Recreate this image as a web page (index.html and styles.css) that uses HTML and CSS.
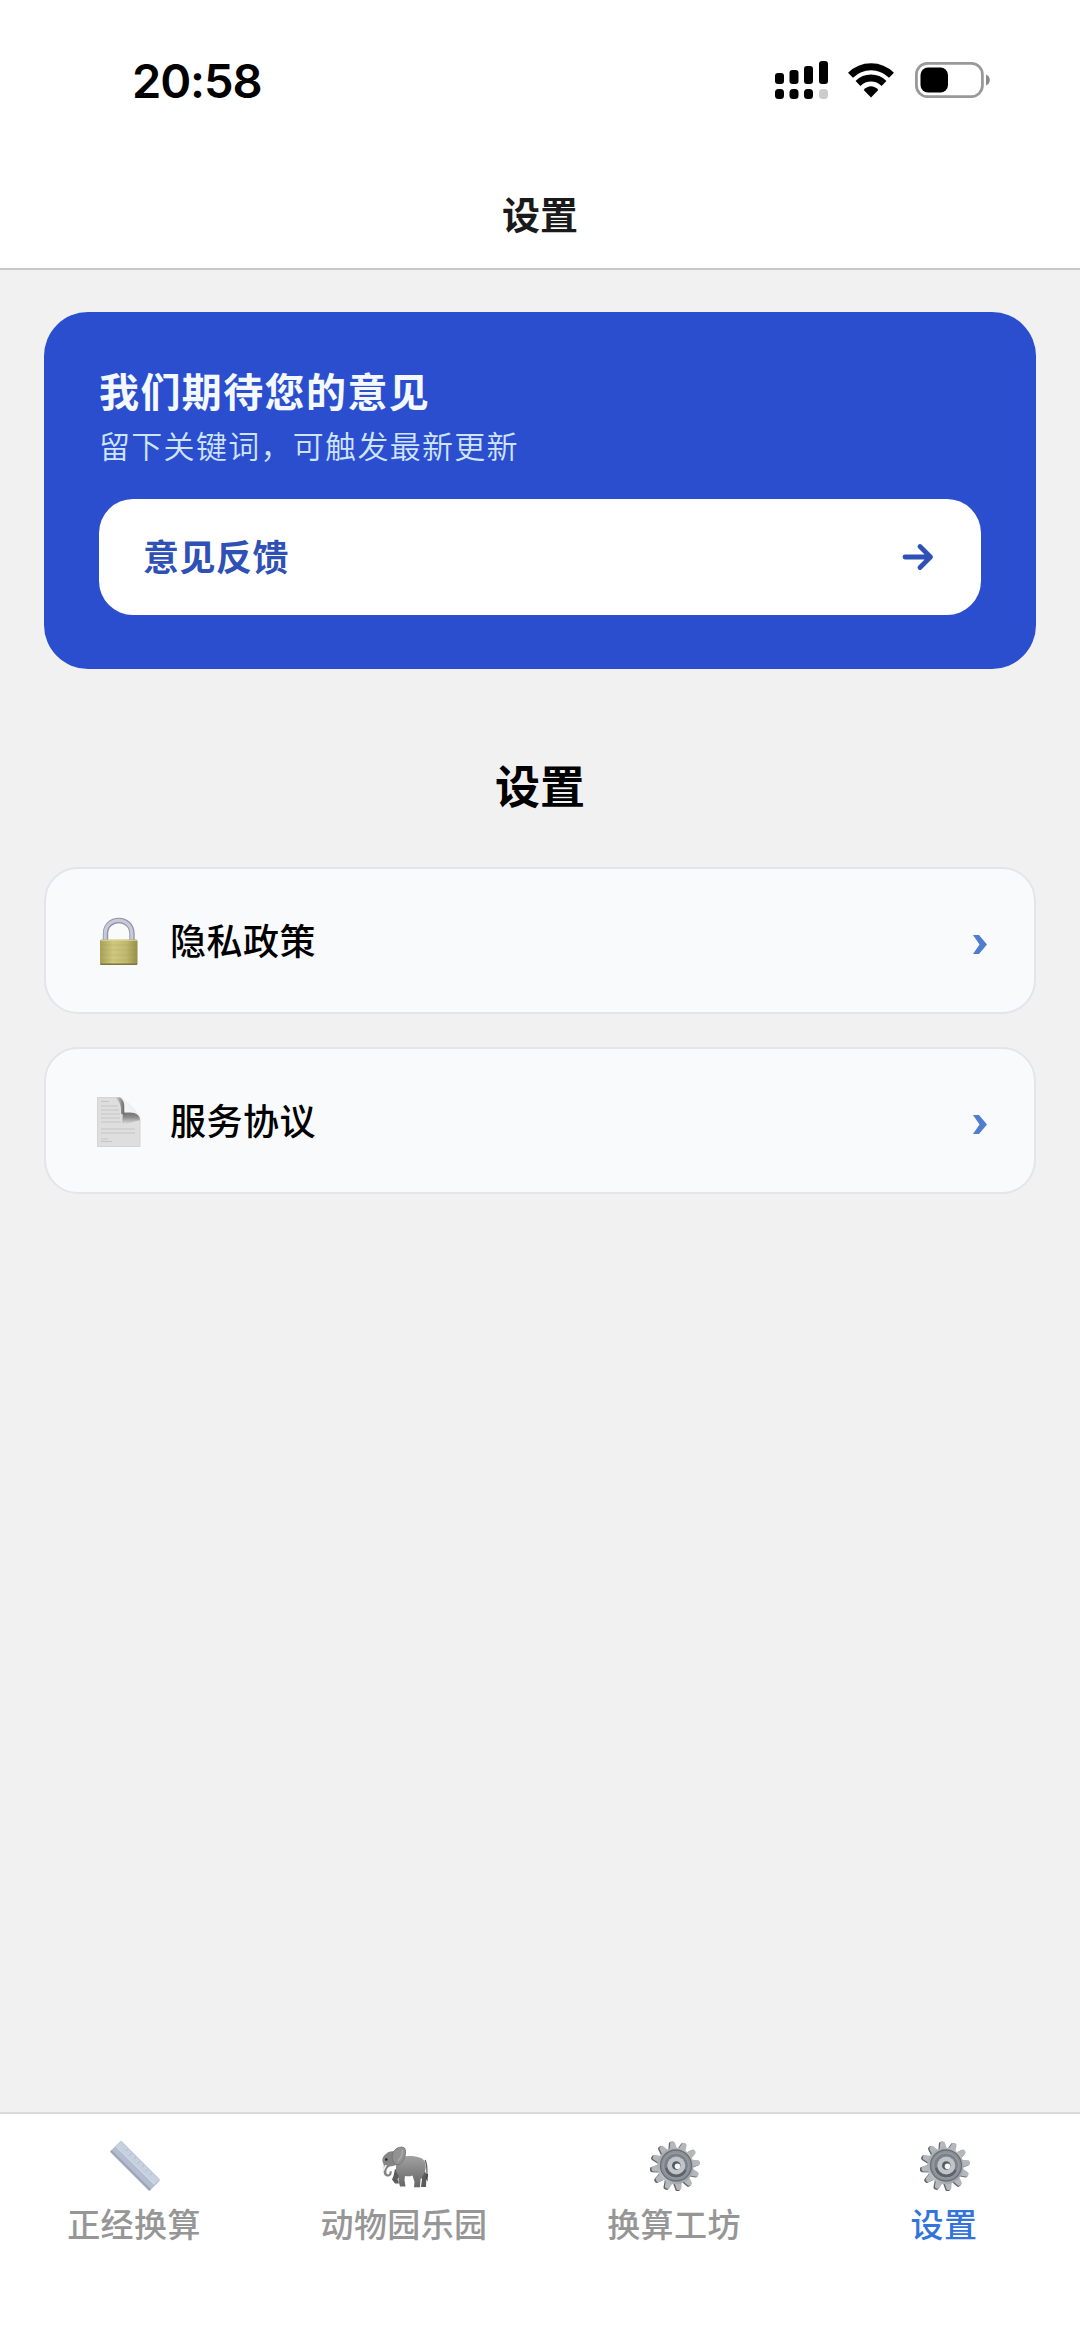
FILE: index.html
```html
<!DOCTYPE html>
<html lang="zh-CN">

<head>
  <meta charset="utf-8">
  <title>设置</title>
  <link rel="stylesheet" href="styles.css">
</head>

<body>
  <div class="status-bar">
    <span class="time">20:58</span>
    <div class="status-icons">
      <svg class="signal" width="54" height="39" viewBox="0 0 54 39">
        <rect x="0" y="12" width="9" height="11" rx="3"/>
        <rect x="14.500" y="9" width="9" height="14" rx="3"/>
        <rect x="29" y="5" width="9" height="18" rx="3"/>
        <rect x="44" y="0" width="9" height="23" rx="3"/>
        <rect x="0" y="28" width="9" height="10" rx="3.500"/>
        <rect x="14.500" y="28" width="9" height="10" rx="3.500"/>
        <rect x="29" y="28" width="9" height="10" rx="3.500"/>
        <rect x="44" y="28" width="9" height="10" rx="3.500" fill="#ccc"/>
      </svg>
      <svg class="wifi" width="46" height="35" viewBox="0 0 46 35">
        <g fill="none" stroke="#000" stroke-width="7">
          <path d="M2.500 12.200C14 .8 32 .8 43.500 12.200"/>
          <path d="M10 20.500C17.500 13.300 28.500 13.300 36 20.500"/>
        </g>
        <path d="M15.700 27C20 22 26 22 30.300 27L23 34.500Z"/>
      </svg>
      <svg class="battery" width="76" height="36" viewBox="0 0 76 36">
        <rect x="1.400" y="1.400" width="66" height="33.200" rx="11" fill="none" stroke="#999" stroke-width="2.800"/>
        <rect x="5.500" y="5.500" width="27.500" height="25" rx="7.500"/>
        <path d="M71 12.500C76 14.500 76 21.500 71 23.500Z" fill="#888"/>
      </svg>
    </div>
  </div>
  <div class="nav-bar">设置</div>

  <div class="content">
    <div class="card">
      <div class="card-title">我们期待您的意见</div>
      <div class="card-text">留下关键词，可触发最新更新</div>
      <div class="feedback">
        <span>意见反馈</span>
        <svg width="32" height="28" viewBox="0 0 32 28" fill="none" stroke="#2f50b4" stroke-width="4.800" stroke-linecap="round" stroke-linejoin="round">
          <path d="M3 14H28M18 3.500L28.500 14L18 24.500"/>
        </svg>
      </div>
    </div>

    <h1 class="title">设置</h1>

    <div class="row">
      <svg class="row-icon" width="44" height="50" viewBox="0 0 44 50">
        <defs>
          <linearGradient id="brass" x1="0" x2="1" y1="0" y2="0">
            <stop offset="0" stop-color="#a8a05a"/>
            <stop offset=".35" stop-color="#cfc880"/>
            <stop offset=".7" stop-color="#bfb86e"/>
            <stop offset="1" stop-color="#968e4a"/>
          </linearGradient>
        </defs>
        <path d="M8.500 24V17C8.500 -1 35 -1 35 17V24" fill="none" stroke="#9092a0" stroke-width="5.400"/>
        <path d="M8.200 24V17C8.200 -1.300 34.800 -1.300 34.800 17V24" fill="none" stroke="#c8cadb" stroke-width="3.200"/>
        <rect x="3" y="22.500" width="37.500" height="25.500" rx="1.500" fill="url(#brass)"/>
        <path d="M4 23.300H40" stroke="#ddd596"/>
        <path d="M4 28H40M4 33H40M4 38H40M4 43H40" stroke="#9f974f" stroke-opacity=".22"/>
        <path d="M3.500 47.300H40" stroke="#7d763e" stroke-width="1.400"/>
      </svg>
      <span class="row-label">隐私政策</span>
      <svg class="chevron" width="14" height="19" viewBox="0 0 14 19"><path d="M0 0H6L14 9.500L6 19H0L6.500 9.500Z" fill="#507dd0"/></svg>
    </div>

    <div class="row">
      <svg class="row-icon" width="44" height="50" viewBox="0 0 44 50">
        <defs>
          <linearGradient id="curl" x1="0" x2="0" y1="0" y2="1">
            <stop offset="0" stop-color="#747474"/>
            <stop offset=".4" stop-color="#8c8c8c"/>
            <stop offset="1" stop-color="#dedede"/>
          </linearGradient>
          <linearGradient id="edge" x1="0" x2="1" y1="0" y2="0">
            <stop offset="0" stop-color="#dedede"/>
            <stop offset="1" stop-color="#666"/>
          </linearGradient>
          <linearGradient id="fold" x1="0" x2="1" y1="1" y2="0">
            <stop offset="0" stop-color="#fff"/>
            <stop offset="1" stop-color="#e2e2e2"/>
          </linearGradient>
        </defs>
        <path d="M.5 .5H22C26 1 27.500 4 27.500 9V15.500H35C40 16 43 19 43 24V49.500H.5Z" fill="#dedede" stroke="#d3d3d3"/>
        <path d="M4 4.500H12M4 9H21M4 13H22M4 17H23M4 21H23M4 25H24M4 32H38M4 36H38M4 42H11M4 44.500H15" stroke="#c4c4c4" stroke-width="1.200"/>
        <path d="M26 15.500H35C40 16 43 19 43 23.500C39 23 35 26 30 27H25Z" fill="url(#curl)"/>
        <path d="M18 .5H22C26 1 27.500 4 27.500 9V18L24 17C24.500 9 23 4 18 .5Z" fill="url(#edge)"/>
        <path d="M23 .5C29 3 40 12 43 20C40 15.500 34 15 27.500 15.500C27.500 9 28 4 23 .5Z" fill="url(#fold)"/>
      </svg>
      <span class="row-label">服务协议</span>
      <svg class="chevron" width="14" height="19" viewBox="0 0 14 19"><path d="M0 0H6L14 9.500L6 19H0L6.500 9.500Z" fill="#507dd0"/></svg>
    </div>
  </div>

  <div class="tab-bar">
    <div class="tab">
      <svg width="50" height="50" viewBox="0 0 50 50">
        <path d="M10 .5Q11 -.3 12 .5L49.500 38Q50 39 49.500 40L40 49.500Q39.500 50 38.500 49.500L.5 11.500Q0 11 .5 10Z" fill="#b3bdcf"/>
        <path d="M11 .3L49.500 38.500L44.500 43.500L5.500 5Z" fill="#c6d0df"/>
        <path d="M.5 10.500L39.500 49.500L41 48.500L1.500 9Z" fill="#98a3b8"/>
        <path d="M18 8L16 10M22 12L19 15M26 16L24 18M30 20L27 23M34 24L32 26M38 28L35 31M42 32L40 34" stroke="#b0bccd"/>
        <path d="M5.500 5L44.500 43.500" stroke="#dae1ec"/>
      </svg>
      <span>正经换算</span>
    </div>
    <div class="tab">
      <svg width="50" height="50" viewBox="0 0 50 50">
        <defs>
          <linearGradient id="skin" x1="0" x2="0" y1="0" y2="1">
            <stop offset="0" stop-color="#a2a2a2"/>
            <stop offset=".6" stop-color="#7d7d7d"/>
            <stop offset="1" stop-color="#666"/>
          </linearGradient>
        </defs>
        <path d="M45 19C48 25 46.500 30 47 36" fill="none" stroke="#555" stroke-width="1.200"/>
        <path d="M46.200 33H47.800L47.500 40.500L46 38Z" fill="#333"/>
        <path d="M15 28L13.500 35L12 38.500L15 42.500H19L17.500 38L22 33ZM38 32L42 38L41 46H46L46.500 34L44 28Z" fill="#5b5b5b"/>
        <path d="M20 15.500C28 14.500 36 14.500 41 17C47 20 46.500 28 44 33L40.500 38.500L40 46.300H34L34.500 41L32.500 34.500C30 35.500 27.500 35.500 25 35L24.500 39L25.500 45.500H20L18.500 40V35L16 30V22Z" fill="url(#skin)"/>
        <path d="M6 13C8 10.500 12 9.500 16 11L17 23C14 26 11.500 24.500 9 26C7 27 6 29.500 6.500 32C7 34 10 34 9.500 30.500L11.500 30C13 36 6 37.500 4 33C2.500 29 5 25.500 3 22C1.500 18 3 15 6 13Z" fill="#858585"/>
        <path d="M12.500 13C14 7.500 21 4.500 24.500 7C27.500 11 24 21.500 19 23.500C14 25 11 18 12.500 13Z" fill="#929292" stroke="#707070" stroke-width=".8"/>
        <path d="M18 20C21 17 22.500 13 22.500 9" fill="none" stroke="#ababab" stroke-width="1.500"/>
        <circle cx="6.300" cy="18.500" r="1.300" fill="#222"/>
        <path d="M7 24L3 32L2 30L5 24Z" fill="#f1eee6"/>
      </svg>
      <span>动物园乐园</span>
    </div>
    <div class="tab">
      <svg width="50" height="50" viewBox="0 0 50 50">
        <defs>
          <linearGradient id="steel" x1="0" x2="1" y1="0" y2="1">
            <stop offset="0" stop-color="#a0a3a8"/>
            <stop offset=".5" stop-color="#bcc0c5"/>
            <stop offset="1" stop-color="#94989d"/>
          </linearGradient>
          <path id="tooth" d="M21 9L22.500 1.500Q22.800 0 25 0T27.500 1.500L29 9Z"/>
          <g id="teeth">
            <use href="#tooth" transform="rotate(-8 25 25)"/>
            <use href="#tooth" transform="rotate(22 25 25)"/>
            <use href="#tooth" transform="rotate(52 25 25)"/>
            <use href="#tooth" transform="rotate(82 25 25)"/>
            <use href="#tooth" transform="rotate(112 25 25)"/>
            <use href="#tooth" transform="rotate(142 25 25)"/>
            <use href="#tooth" transform="rotate(172 25 25)"/>
            <use href="#tooth" transform="rotate(202 25 25)"/>
            <use href="#tooth" transform="rotate(232 25 25)"/>
            <use href="#tooth" transform="rotate(262 25 25)"/>
            <use href="#tooth" transform="rotate(292 25 25)"/>
            <use href="#tooth" transform="rotate(322 25 25)"/>
          </g>
          <g id="gear">
            <use href="#teeth" fill="#5f6266" transform="translate(-.4 .4)"/>
            <use href="#teeth" fill="#b4b7bb" transform="translate(1.200 .3) scale(.98)"/>
            <circle cx="25.300" cy="25" r="18.300" fill="url(#steel)"/>
            <circle cx="26" cy="24.500" r="15.500" fill="#8b9197" stroke="#6a7076" stroke-width="1.300"/>
            <circle cx="26" cy="24.500" r="12.500" fill="#7b8289" stroke="#9ba1a7" stroke-width="1"/>
            <path d="M15 27A11.500 11.500 0 0 0 36.500 30L31 24Z" fill="#5d6369"/>
            <circle cx="26.300" cy="24.500" r="9" fill="#c1c5ca"/>
            <circle cx="26.300" cy="24.500" r="4.300" fill="#555a60"/>
            <circle cx="27.500" cy="25.300" r="2.800" fill="#f4f5f6"/>
          </g>
        </defs>
        <use href="#gear"/>
      </svg>
      <span>换算工坊</span>
    </div>
    <div class="tab active">
      <svg width="50" height="50" viewBox="0 0 50 50"><use href="#gear"/></svg>
      <span>设置</span>
    </div>
  </div>
</body>

</html>
```
FILE: styles.css
```css
* {
  box-sizing: border-box;
}

body {
  margin: 0;
  height: 2341px;
  display: flex;
  flex-direction: column;
  background-color: #f1f1f1;
  color: #000;
  font-family: "Noto Sans CJK SC", sans-serif;
}

.status-bar {
  height: 160px;
  padding: 0 89px 0 132px;
  display: flex;
  justify-content: space-between;
  align-items: center;
  background-color: #fff;
}

.time {
  padding-top: 1px;
  font-family: Inter, sans-serif;
  font-size: 47px;
  font-weight: 600;
  line-height: 56px;
  letter-spacing: -1.1px;
}

.status-icons {
  display: flex;
  align-items: center;
}

.wifi {
  margin-left: 19px;
}

.battery {
  margin-left: 21px;
}

.nav-bar {
  height: 110px;
  border-bottom: 2px solid #c8c8c8;
  background-color: #fff;
  color: #1a1a1a;
  font-size: 38px;
  font-weight: 700;
  line-height: 106px;
  text-align: center;
}

.content {
  flex: 1;
  padding: 42px 44px 0;
}

.card {
  height: 357px;
  padding: 52px 55px 0;
  border-radius: 44px;
  background-color: #2b4ecf;
  color: #f4f9ff;
}

.card-title {
  font-size: 40px;
  font-weight: 700;
  line-height: 52px;
  letter-spacing: 1.4px;
}

.card-text {
  margin-top: 6px;
  color: #cfe4ff;
  font-size: 31px;
  font-weight: 350;
  line-height: 46px;
  letter-spacing: 1.3px;
}

.feedback {
  height: 116px;
  margin-top: 31px;
  padding: 0 47px 0 44px;
  display: flex;
  justify-content: space-between;
  align-items: center;
  border-radius: 34px;
  background-color: #fff;
  color: #2f50b4;
  font-size: 36px;
  font-weight: 700;
  letter-spacing: .5px;
}

.feedback span {
  padding-bottom: 4px;
}

.title {
  margin: 85px 0 51px;
  font-size: 45px;
  font-weight: 700;
  line-height: 62px;
  text-align: center;
}

.row {
  height: 147px;
  margin: 0 0 33px;
  padding: 0 47px 0 51px;
  display: flex;
  align-items: center;
  border: 2px solid #e4e5eb;
  border-radius: 34px;
  background-color: #f9fafc;
}

.row-icon {
  margin-top: 2px;
}

.row-label {
  margin-left: 29px;
  padding-bottom: 3px;
  font-size: 36px;
  font-weight: 500;
  line-height: 54px;
  letter-spacing: .5px;
}

.chevron {
  margin-left: auto;
  margin-top: 8px;
}

.tab-bar {
  height: 229px;
  display: flex;
  border-top: 2px solid #d9d9d9;
  background-color: #fff;
}

.tab {
  flex: 1;
  padding-top: 27px;
  display: flex;
  flex-direction: column;
  align-items: center;
  color: #969696;
  font-size: 33px;
  font-weight: 500;
  line-height: 48px;
  letter-spacing: .4px;
}

.tab span {
  margin-top: 8px;
  padding-right: 2px;
}

.active {
  color: #3273dc;
}
```
